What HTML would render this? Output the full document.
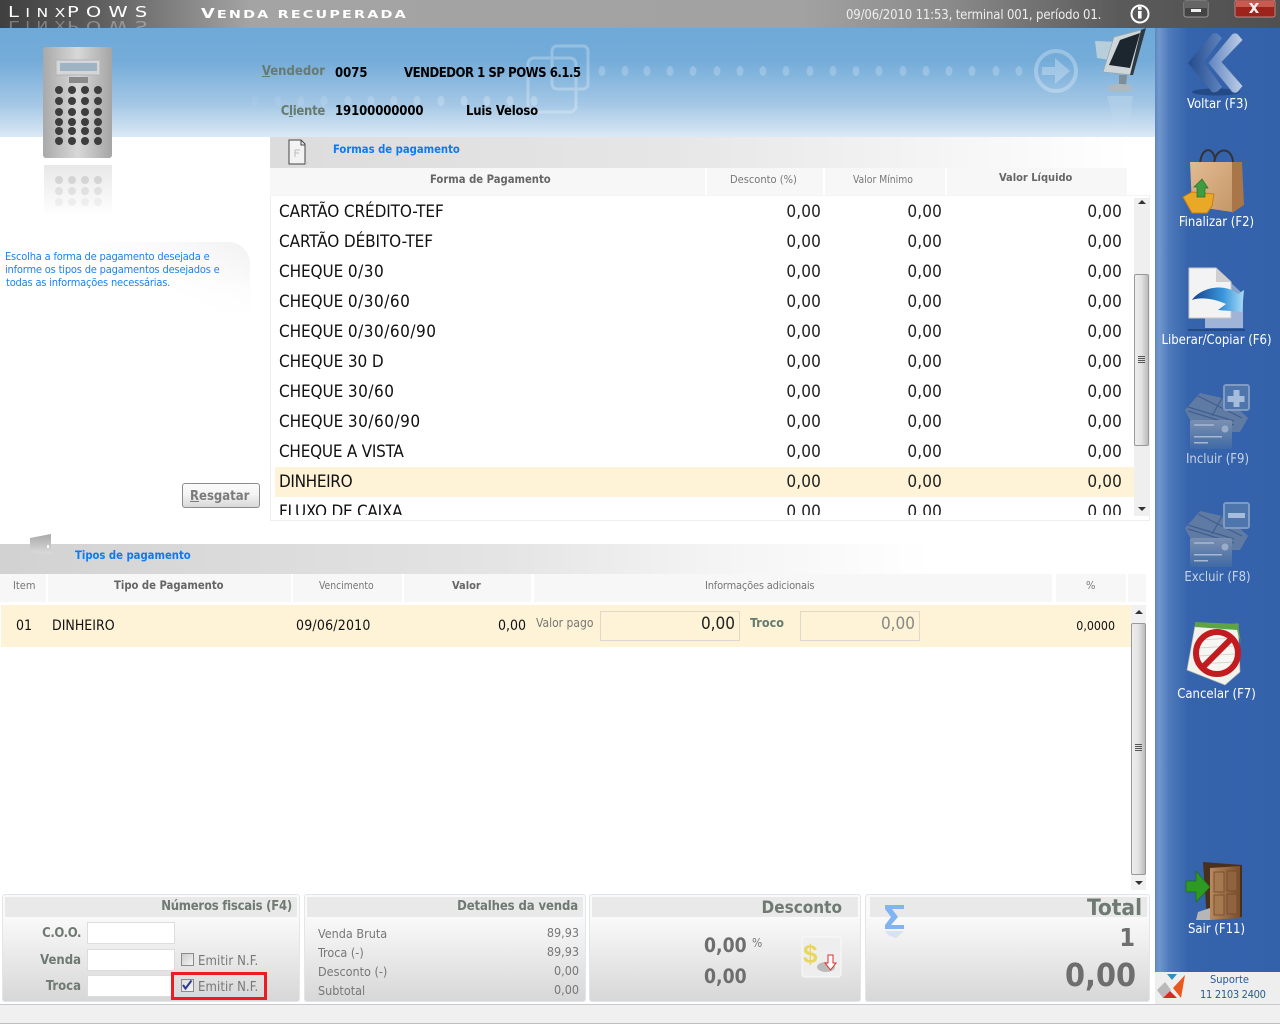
<!DOCTYPE html>
<html lang="pt">
<head>
<meta charset="utf-8">
<title>LinxPOWS</title>
<style>
html,body{margin:0;padding:0;width:1280px;height:1024px;overflow:hidden;background:#fff}
body{position:relative;font-family:"DejaVu Sans Condensed","DejaVu Sans","Liberation Sans",sans-serif;font-stretch:condensed}
.b{position:absolute}
.t{position:absolute;white-space:nowrap;height:20px;line-height:20px;font-size:12px;color:#777;margin-top:1px}
.bd{font-weight:bold}
.r{text-align:right}
.li{font-size:17px;color:#111;letter-spacing:-.1px}
.li span{letter-spacing:.5px}
.n{font-size:17px;color:#222;text-align:right;width:80px;letter-spacing:.15px}
.h{position:absolute;background:#f7f7f7}
.lab{color:#fff;font-size:13px;text-align:center;width:125px;left:1155px}
svg{position:absolute;left:0;top:0}
.wide{font-family:"DejaVu Sans",sans-serif;font-stretch:normal;color:#fff;position:absolute;white-space:nowrap;transform-origin:0 0}
</style>
</head>
<body>
<div class="b" style="left:0;top:0;width:1280px;height:28px;background:linear-gradient(90deg,#3f3f3f 0,#5a5a5a 90px,#a4a4a4 250px,#a2a2a2 800px,#8a8a8a 950px,#5a5a5a 1120px,#505050 1280px)"></div>
<div class="b" style="left:0;top:28px;width:1155px;height:109px;background:linear-gradient(180deg,#6fa9d8 0,#74acd9 30%,#a4c7e5 70%,#dbe9f5 100%)"></div>
<div class="b" style="left:1155px;top:28px;width:125px;height:944px;background:linear-gradient(90deg,#5d86bf 0,#7198cd 4px,#4f7aba 14px,#3563ac 34px,#3362ab 100%)"></div>
<div class="b" style="left:1155px;top:972px;width:125px;height:32px;background:#eeeeee"></div>

<!-- forma pagamento -->
<div class="b" style="left:270px;top:137px;width:885px;height:31px;background:linear-gradient(90deg,#dcdcdc 0,#e6e6e6 400px,#fff 860px)"></div>
<div class="h" style="left:270px;top:168px;width:435px;height:27px"></div>
<div class="h" style="left:707px;top:168px;width:116px;height:27px"></div>
<div class="h" style="left:825px;top:168px;width:120px;height:27px"></div>
<div class="h" style="left:947px;top:168px;width:180px;height:27px"></div>
<div class="b" style="left:270px;top:195px;width:880px;height:326px;border:1px solid #eee;border-top:1px solid #f4f4f4;box-sizing:border-box;overflow:hidden"></div>
<div class="b" style="left:275px;top:467px;width:859px;height:30px;background:#fef3d7"></div>
<div class="b" style="left:1134px;top:198px;width:16px;height:318px;background:#efefef"></div>
<div class="b" style="left:1134px;top:274px;width:15px;height:172px;box-sizing:border-box;border:1px solid #999;border-radius:2px;background:linear-gradient(90deg,#eee,#e2e2e2 50%,#bbb)"></div>

<!-- left help -->
<div class="b" style="left:0;top:242px;width:250px;height:92px;border-top-right-radius:22px;background:linear-gradient(180deg,rgba(255,255,255,0) 35%,#fff 100%),linear-gradient(205deg,#f1f1f1 0,#fafafa 20%,#fff 42%)"></div>
<div class="t" style="left:5px;top:246px;font-size:11px;color:#1a82f0;letter-spacing:-.19px">Escolha a forma de pagamento desejada e</div>
<div class="t" style="left:5px;top:259px;font-size:11px;color:#1a82f0;letter-spacing:-.19px">informe os tipos de pagamentos desejados e</div>
<div class="t" style="left:6px;top:272px;font-size:11px;color:#1a82f0;letter-spacing:-.19px">todas as informações necessárias.</div>
<div class="b" style="left:182px;top:483px;width:78px;height:25px;box-sizing:border-box;border:1px solid #8c8c8c;border-radius:3px;background:linear-gradient(180deg,#fbfbfb,#f4f4f4 45%,#d8d8d8)"></div>
<div class="t bd" style="left:190px;top:486px;font-size:13px;color:#7b7b7b"><u>R</u>esgatar</div>

<!-- tipos -->
<div class="b" style="left:0;top:544px;width:940px;height:30px;background:linear-gradient(90deg,#d2d2d2 0,#e4e4e4 500px,#f3f3f3 700px,#fff 930px)"></div>
<div class="h" style="left:0;top:574px;width:46px;height:28px"></div>
<div class="h" style="left:48px;top:574px;width:243px;height:28px"></div>
<div class="h" style="left:293px;top:574px;width:109px;height:28px"></div>
<div class="h" style="left:404px;top:574px;width:127px;height:28px"></div>
<div class="h" style="left:534px;top:574px;width:518px;height:28px"></div>
<div class="h" style="left:1056px;top:574px;width:70px;height:28px"></div>
<div class="h" style="left:1128px;top:574px;width:18px;height:28px"></div>
<div class="b" style="left:1px;top:605px;width:1130px;height:42px;background:#fef3d7"></div>
<div class="b" style="left:600px;top:611px;width:140px;height:30px;box-sizing:border-box;border:1px solid #ddd9cc"></div>
<div class="b" style="left:800px;top:611px;width:120px;height:30px;box-sizing:border-box;border:1px solid #ddd9cc"></div>
<div class="b" style="left:1131px;top:605px;width:15px;height:285px;background:#f1f1f1"></div>
<div class="b" style="left:1131px;top:623px;width:15px;height:252px;box-sizing:border-box;border:1px solid #999;border-radius:2px;background:linear-gradient(90deg,#eee,#e2e2e2 50%,#bbb)"></div>

<!-- bottom panels -->
<div class="b" style="left:2px;top:894px;width:298px;height:108px;box-sizing:border-box;border:1px solid #dfe6ec;border-radius:3px;background:linear-gradient(180deg,#fafafa 20%,#d7d7d7 100%)"></div>
<div class="b" style="left:304px;top:894px;width:282px;height:108px;box-sizing:border-box;border:1px solid #dfe6ec;border-radius:3px;background:linear-gradient(180deg,#fafafa 20%,#d7d7d7 100%)"></div>
<div class="b" style="left:589px;top:894px;width:272px;height:108px;box-sizing:border-box;border:1px solid #dfe6ec;border-radius:3px;background:linear-gradient(180deg,#fafafa 20%,#d7d7d7 100%)"></div>
<div class="b" style="left:865px;top:894px;width:285px;height:108px;box-sizing:border-box;border:1px solid #dfe6ec;border-radius:3px;background:linear-gradient(180deg,#fafafa 20%,#d7d7d7 100%)"></div>
<div class="b" style="left:5px;top:897px;width:292px;height:20px;background:#e9e9e9"></div>
<div class="b" style="left:307px;top:897px;width:276px;height:20px;background:#e9e9e9"></div>
<div class="b" style="left:592px;top:897px;width:266px;height:20px;background:#e9e9e9"></div>
<div class="b" style="left:870px;top:897px;width:277px;height:20px;background:#e9e9e9"></div>
<div class="b" style="left:87px;top:922px;width:88px;height:22px;box-sizing:border-box;background:#fff;border:1px solid #ddd"></div>
<div class="b" style="left:87px;top:949px;width:88px;height:22px;box-sizing:border-box;background:#fff;border:1px solid #ddd"></div>
<div class="b" style="left:87px;top:975px;width:88px;height:22px;box-sizing:border-box;background:#fff;border:1px solid #ddd"></div>
<div class="b" style="left:171px;top:972px;width:96px;height:28px;box-sizing:border-box;border:3px solid #ed1c24"></div>
<div class="b" style="left:181px;top:953px;width:13px;height:13px;box-sizing:border-box;border:1px solid #8a8a8a;background:linear-gradient(135deg,#ccc,#f4f4f4)"></div>
<div class="b" style="left:181px;top:979px;width:13px;height:13px;box-sizing:border-box;border:1px solid #8a8a8a;background:linear-gradient(135deg,#ddd,#f4f4f4)"></div>
<div class="b" style="left:0;top:1004px;width:1280px;height:20px;box-sizing:border-box;background:#f0f0f0;border-top:1px solid #c9c9c9;border-bottom:1px solid #bdbdbd"></div>

<!-- graphics -->
<svg width="1280" height="1024" viewBox="0 0 1280 1024">
<defs>
<linearGradient id="calc" x1="0" x2="1" y1="0" y2="0"><stop offset="0" stop-color="#a9a9a9"/><stop offset=".5" stop-color="#d8d8d8"/><stop offset="1" stop-color="#a5a5a5"/></linearGradient>
<linearGradient id="fade" x1="0" x2="0" y1="0" y2="1"><stop offset="0" stop-color="#ccc" stop-opacity=".45"/><stop offset="1" stop-color="#ccc" stop-opacity="0"/></linearGradient>
<linearGradient id="bag" x1="0" x2="1" y1="0" y2="1"><stop offset="0" stop-color="#e3bb92"/><stop offset="1" stop-color="#c49868"/></linearGradient>
<linearGradient id="arw" x1="0" x2="1" y1="0" y2="0"><stop offset="0" stop-color="#12428a"/><stop offset=".6" stop-color="#3a96dc"/><stop offset="1" stop-color="#a9dcf8"/></linearGradient>
<linearGradient id="door" x1="0" x2="1" y1="0" y2="0"><stop offset="0" stop-color="#b98a5e"/><stop offset="1" stop-color="#7b4e2b"/></linearGradient>
<linearGradient id="card" x1="0" x2="0" y1="0" y2="1"><stop offset="0" stop-color="#7b90b0"/><stop offset="1" stop-color="#3f6aa6"/></linearGradient>
<linearGradient id="chev1" x1="0" x2="1"><stop offset="0" stop-color="#234b8c"/><stop offset="1" stop-color="#5f83bd"/></linearGradient>
<linearGradient id="chev2" x1="0" x2="1"><stop offset="0" stop-color="#5f83bf"/><stop offset="1" stop-color="#bfcfe8"/></linearGradient>
<linearGradient id="tip" x1="0" x2="0" y1="0" y2="1"><stop offset="0" stop-color="#a8a8a8"/><stop offset="1" stop-color="#dcdcdc"/></linearGradient>
<linearGradient id="mrefl" x1="0" x2="0" y1="0" y2="1"><stop offset="0" stop-color="#fff" stop-opacity=".16"/><stop offset="1" stop-color="#fff" stop-opacity="0"/></linearGradient>
</defs>

<!-- header deco -->
<g fill="#fff" opacity=".2">
<ellipse cx="602" cy="71" rx="3.500" ry="5"/><ellipse cx="625" cy="71" rx="3.500" ry="5"/><ellipse cx="647" cy="71" rx="3.500" ry="5"/><ellipse cx="670" cy="71" rx="3.500" ry="5"/><ellipse cx="693" cy="71" rx="3.500" ry="5"/><ellipse cx="717" cy="71" rx="3.500" ry="5"/><ellipse cx="740" cy="71" rx="3.500" ry="5"/><ellipse cx="763" cy="71" rx="3.500" ry="5"/><ellipse cx="786" cy="71" rx="3.500" ry="5"/><ellipse cx="810" cy="71" rx="3.500" ry="5"/><ellipse cx="833" cy="71" rx="3.500" ry="5"/><ellipse cx="856" cy="71" rx="3.500" ry="5"/><ellipse cx="879" cy="71" rx="3.500" ry="5"/><ellipse cx="903" cy="71" rx="3.500" ry="5"/><ellipse cx="926" cy="71" rx="3.500" ry="5"/><ellipse cx="949" cy="71" rx="3.500" ry="5"/><ellipse cx="972" cy="71" rx="3.500" ry="5"/><ellipse cx="996" cy="71" rx="3.500" ry="5"/><ellipse cx="1019" cy="71" rx="3.500" ry="5"/>
</g>
<g fill="#fff">
<ellipse cx="255" cy="101" rx="3.500" ry="5" opacity=".06"/><ellipse cx="278" cy="101" rx="3.500" ry="5" opacity=".08"/><ellipse cx="301" cy="101" rx="3.500" ry="5" opacity=".1"/><ellipse cx="324" cy="101" rx="3.500" ry="5" opacity=".12"/><ellipse cx="348" cy="101" rx="3.500" ry="5" opacity=".14"/><ellipse cx="371" cy="101" rx="3.500" ry="5" opacity=".16"/><ellipse cx="394" cy="101" rx="3.500" ry="5" opacity=".18"/><ellipse cx="417" cy="101" rx="3.500" ry="5" opacity=".2"/><ellipse cx="441" cy="101" rx="3.500" ry="5" opacity=".22"/><ellipse cx="464" cy="101" rx="3.500" ry="5" opacity=".24"/><ellipse cx="487" cy="101" rx="3.500" ry="5" opacity=".24"/><ellipse cx="510" cy="101" rx="3.500" ry="5" opacity=".24"/><ellipse cx="534" cy="101" rx="3.500" ry="5" opacity=".24"/>
</g>
<g fill="none" stroke="#fff" stroke-width="3" opacity=".26">
<rect x="528" y="58" width="48" height="54" rx="6"/>
<rect x="552" y="46" width="36" height="43" rx="5"/>
</g>
<circle cx="1056" cy="71" r="20" fill="none" stroke="#fff" stroke-width="4" opacity=".28"/>
<path d="M1042 67h13v-9l15 13-15 13v-9h-13z" fill="#fff" opacity=".28"/>

<!-- calculator -->
<rect x="43" y="47" width="69" height="111" rx="3" fill="url(#calc)"/>
<rect x="56" y="60" width="44" height="15" fill="#d3d7da" stroke="#b3b3b3"/>
<rect x="60" y="63" width="37" height="8" fill="#9fb4c2"/>
<rect x="69" y="77" width="19" height="6" fill="#8a8a8a"/>
<g fill="#3d3d3d">
<circle cx="59" cy="90" r="4"/><circle cx="72" cy="90" r="4"/><circle cx="85" cy="90" r="4"/><circle cx="98" cy="90" r="4"/>
<circle cx="59" cy="101" r="4"/><circle cx="72" cy="101" r="4"/><circle cx="85" cy="101" r="4"/><circle cx="98" cy="101" r="4"/>
<circle cx="59" cy="112" r="4"/><circle cx="72" cy="112" r="4"/><circle cx="85" cy="112" r="4"/><circle cx="98" cy="112" r="4"/>
<circle cx="59" cy="122" r="4"/><circle cx="72" cy="122" r="4"/><circle cx="85" cy="122" r="4"/><circle cx="98" cy="122" r="4"/>
<circle cx="59" cy="131" r="4"/><circle cx="72" cy="131" r="4"/><circle cx="85" cy="131" r="4"/><circle cx="98" cy="131" r="4"/>
<circle cx="59" cy="141" r="4"/><circle cx="72" cy="141" r="4"/><circle cx="85" cy="141" r="4"/><circle cx="98" cy="141" r="4"/>
</g>
<rect x="44" y="165" width="68" height="52" fill="url(#fade)"/>
<g fill="#999" opacity=".3">
<circle cx="59" cy="180" r="4"/><circle cx="72" cy="180" r="4"/><circle cx="85" cy="180" r="4"/><circle cx="98" cy="180" r="4"/>
<circle cx="59" cy="191" r="4" opacity=".7"/><circle cx="72" cy="191" r="4" opacity=".7"/><circle cx="85" cy="191" r="4" opacity=".7"/><circle cx="98" cy="191" r="4" opacity=".7"/>
<circle cx="59" cy="202" r="4" opacity=".35"/><circle cx="72" cy="202" r="4" opacity=".35"/><circle cx="85" cy="202" r="4" opacity=".35"/><circle cx="98" cy="202" r="4" opacity=".35"/>
</g>

<!-- monitor -->
<path d="M1095 41l26 1-5 19-19-3z" fill="#c9d7d9" opacity=".8"/>
<path d="M1114 37l31-8-12 46-30-3z" fill="#cfd6da" stroke="#9aa5ab" stroke-width=".7"/>
<path d="M1120 40l20-7-10 35-21-3z" fill="#1c262e"/>
<path d="M1141 30l5-2-13 47-3 0z" fill="#2e3a42"/>
<path d="M1119 75l8 0-1 10h-7z" fill="#7f8d96"/>
<ellipse cx="1120" cy="88" rx="13" ry="4" fill="#aeb9bf"/>
<path d="M1107 96h26l-4 30h-14z" fill="url(#mrefl)"/>

<!-- info -->
<circle cx="1140" cy="14" r="8.500" fill="none" stroke="#fff" stroke-width="2"/>
<path d="M1138 6.800h3.600v3h-3.600zM1138 11h3.600v7.500h-3.600z" fill="#fff"/>

<!-- window buttons -->
<rect x="1184" y="1" width="24" height="16" rx="2" fill="#444" stroke="#999"/>
<rect x="1184" y="1" width="24" height="7" fill="#656565"/>
<rect x="1191" y="9" width="10" height="3" fill="#eee"/>
<rect x="1235" y="0" width="40" height="17" rx="2" fill="#9d241c" stroke="#bb8883"/>
<rect x="1236" y="1" width="38" height="6" fill="#c85a50"/>
<path d="M1249 3l3 0 2 3 2-3 3 0-3.500 5 3.500 5-3 0-2-3-2 3-3 0 3.500-5z" fill="#f0eeee"/>

<!-- voltar -->
<ellipse cx="1216" cy="92" rx="24" ry="3.500" fill="#234a85"/>
<path d="M1188 63l24-29q3-2 6 0l4 4-18 24 18 25-4 4q-3 2-6 1z" fill="url(#chev1)"/>
<path d="M1208 63l24-29q3-2 6 0l5 6-21 22 21 24-5 6q-3 2-6 0z" fill="url(#chev2)" stroke="#3d66a5" stroke-width=".8"/>

<!-- bag -->
<path d="M1200 166c0-20 14-20 15-6M1214 166c0-20 18-20 19-4" fill="none" stroke="#333" stroke-width="2"/>
<path d="M1190 162h42l0 50-40-6z" fill="url(#bag)"/>
<path d="M1232 162l10 0 2 43-12 8z" fill="#a87648"/>
<path d="M1183 197l9-5 22 2-2 12-5 7h-15z" fill="#e9a826" stroke="#c97f15"/>
<path d="M1197 197v-10h-3l8-8 6 9h-3v9z" fill="#3f9c40" stroke="#2d6c2c" stroke-width=".7"/>

<!-- liberar -->
<path d="M1205 300h38v28h-38z" fill="#9fb4d6"/>
<path d="M1228 280l15 14v10h-15z" fill="#88a2c9"/>
<path d="M1189 268h27l15 14v36h-42z" fill="#f3f3f3" stroke="#c9c9c9"/>
<path d="M1216 268l15 14h-15z" fill="#cfcfcf"/>
<path d="M1192 300c8-12 32-18 46-6l6-4-2 22-24-2 8-6c-8-4-24-8-34-4z" fill="url(#arw)"/>
<rect x="1188" y="329" width="57" height="2" fill="#203d6e" opacity=".7"/>

<!-- incluir -->
<g id="cards">
<path d="M1185 410l15-17 22 5 10 5 16 15-8 14h-8l-42-12z" fill="#607ba3"/>
<path d="M1188 407l46 14M1188 411l46 14M1198 396l44 22M1222 398l-10 18" stroke="#3f5e90" stroke-width="1.200" fill="none"/>
<rect x="1190" y="420" width="42" height="29" rx="2" fill="url(#card)"/>
<rect x="1194" y="424" width="20" height="2" fill="#99adc9"/>
<rect x="1194" y="436" width="28" height="1.500" fill="#a7b8d0"/>
<rect x="1194" y="442" width="14" height="1.500" fill="#a7b8d0"/>
<circle cx="1225" cy="429" r="3.500" fill="#99adc9"/>
</g>
<rect x="1224" y="385" width="25" height="25" rx="2" fill="#4f75ad" stroke="#7f9bc4" stroke-width="2"/>
<path d="M1233.500 390h6v6h5v6h-5v5h-6v-5h-6v-6h6z" fill="#a6bcdb"/>

<!-- excluir -->
<use href="#cards" y="118"/>
<rect x="1224" y="503" width="25" height="25" rx="2" fill="#4f75ad" stroke="#7f9bc4" stroke-width="2"/>
<rect x="1228" y="513" width="17" height="5" fill="#a6bcdb"/>

<!-- cancelar -->
<path d="M1195 626l43-2 2 48-15 13-38-15z" fill="#f3f3ee" stroke="#b9b9b0" stroke-width=".7"/>
<path d="M1195 622l43 2 3 20-4-14-42-3z" fill="#5fa344"/>
<g stroke="#c9c9c2" stroke-width="1"><path d="M1198 640l36-2M1197 648l38-2M1196 656l40-2M1195 664l41-2"/></g>
<circle cx="1217" cy="653" r="21" fill="#ffffff" fill-opacity=".25" stroke="#c21c20" stroke-width="6"/>
<path d="M1202 668l30-30" stroke="#c21c20" stroke-width="6"/>

<!-- sair -->
<path d="M1203 862l39 3v52l-35 3z" fill="#49301c"/>
<path d="M1210 868l30-2v52l-30 2z" fill="url(#door)"/>
<rect x="1214" y="872" width="10" height="20" fill="#a67a50" stroke="#6f4a2a" stroke-width=".8"/>
<rect x="1227" y="871" width="10" height="20" fill="#8f6340" stroke="#6f4a2a" stroke-width=".8"/>
<rect x="1214" y="895" width="10" height="20" fill="#a67a50" stroke="#6f4a2a" stroke-width=".8"/>
<rect x="1227" y="894" width="10" height="20" fill="#8f6340" stroke="#6f4a2a" stroke-width=".8"/>
<path d="M1198 912l12-4v12l-14 0z" fill="#b6b6b6"/>
<path d="M1186 881h10v-10l14 16-14 15v-10h-10z" fill="#2d9a24" stroke="#1d6c18" stroke-width=".7"/>

<!-- support logo -->
<path d="M1167 974h10l-5 6z" fill="#2f8fc2"/>
<path d="M1185 975l-12 13 8 10z" fill="#e8581f"/>
<path d="M1165 982l6 8-8 8-6-8z" fill="#b9b9b9"/>
<path d="M1170 991l7 7h-14z" fill="#d92a25"/>

<!-- icons small -->
<path d="M289 140h12l4 4v20h-16z" fill="#f3f3f3" stroke="#444"/>
<path d="M301 140v5h4" fill="none" stroke="#444"/>
<path d="M295 150h5M295 150v7M295 153h4" stroke="#bbb" fill="none"/>
<path d="M305 162l3 1-3 1z" fill="#aaa"/>
<path d="M30 538l21-4v20l-21-2z" fill="url(#tip)"/>
<path d="M47 545h2v3h-2z" fill="#fff"/>

<!-- sigma -->
<path d="M885 905h19v4l-12 0 6 8-7 8 13 0v4h-19v-4l6-8-6-8z" fill="#82b4f2"/>
<path d="M885 931h19l-8 7-8-3z" fill="#82b4f2" opacity=".25"/>

<!-- desconto button -->
<rect x="802" y="937" width="39" height="40" rx="3" fill="#eeeeee" stroke="#fafafa"/>
<ellipse cx="826" cy="967" rx="9" ry="5" fill="#bbb"/>
<text x="803" y="963" font-family="Liberation Sans,sans-serif" font-weight="bold" font-size="26" fill="#e9d65f">$</text>
<path d="M828 955h5v8h3l-5.500 7-5.500-7h3z" fill="#fff" stroke="#e02a2a" stroke-width="1"/>

<!-- checkmark -->
<path d="M183 985l2.500 3.500 6-8" fill="none" stroke="#2f3b92" stroke-width="2"/>

<!-- scroll arrows -->
<g fill="#333">
<path d="M1138 204l4-4 4 4z"/><path d="M1138 507l4 4 4-4z"/>
<path d="M1135 614l4-4 4 4z"/><path d="M1135 881l4 4 4-4z"/>
</g>
<g stroke="#555" stroke-width="1">
<path d="M1138 356.500h7M1138 358.500h7M1138 360.500h7M1138 362.500h7"/>
<path d="M1135 744.500h7M1135 746.500h7M1135 748.500h7M1135 750.500h7"/>
</g>
</svg>

<!-- title bar text -->
<div class="b" style="left:0;top:0;width:300px;height:28px;overflow:hidden">
<div class="wide" style="left:8px;top:3px;font-size:15px;line-height:18px;letter-spacing:5px;transform:scaleX(1.3)">L<span style="font-size:12px">INX</span></div>
<div class="wide" style="left:67px;top:3px;font-size:15px;line-height:18px;letter-spacing:5.500px;transform:scaleX(1.3)">POWS</div>
<div class="wide" style="left:8px;top:17px;font-size:15px;line-height:18px;letter-spacing:5px;opacity:.3;transform:scale(1.3,-1);transform-origin:0 9px">L<span style="font-size:12px">INX</span></div>
<div class="wide" style="left:67px;top:17px;font-size:15px;line-height:18px;letter-spacing:5.500px;opacity:.3;transform:scale(1.3,-1);transform-origin:0 9px">POWS</div>
</div>
<div class="wide" style="left:201px;top:5px;height:20px;line-height:20px;font-size:13px;letter-spacing:1.600px;font-weight:bold;transform:scaleX(1.365)">V<span style="font-size:10.500px">ENDA RECUPERADA</span></div>
<div class="t" style="left:846px;top:5px;font-size:13px;color:#eee;letter-spacing:-.14px">09/06/2010 11:53, terminal 001, período 01.</div>

<!-- header text -->
<div class="t bd r" style="right:955px;top:61px;font-size:13px;color:#667a70"><u>V</u>endedor</div>
<div class="t bd" style="left:335px;top:63px;font-size:13px;color:#000">0075</div>
<div class="t bd" style="left:404px;top:63px;font-size:13px;color:#000;letter-spacing:-.46px">VENDEDOR 1 SP POWS 6.1.5</div>
<div class="t bd r" style="right:955px;top:101px;font-size:13px;color:#667a70;letter-spacing:-.3px">C<u>l</u>iente</div>
<div class="t bd" style="left:335px;top:101px;font-size:13px;color:#000;letter-spacing:-.1px">19100000000</div>
<div class="t bd" style="left:466px;top:101px;font-size:13px;color:#000;letter-spacing:-.2px">Luis Veloso</div>

<div class="t bd" style="left:333px;top:139px;font-size:11.200px;color:#0a7bf5">Formas de pagamento</div>
<div class="t bd" style="left:430px;top:169px;font-size:11.200px;color:#666">Forma de Pagamento</div>
<div class="t" style="left:730px;top:169px;font-size:11px;color:#777">Desconto (%)</div>
<div class="t" style="left:853px;top:169px;font-size:10.300px;color:#777">Valor Mínimo</div>
<div class="t bd" style="left:999px;top:167px;font-size:11px;color:#666">Valor Líquido</div>

<!-- list -->
<div class="b" style="left:271px;top:196px;width:863px;height:319px;overflow:hidden">
<div class="t li" style="left:8px;top:5px">CARTÃO CRÉDITO-TEF</div><div class="t n" style="left:470px;top:5px">0,00</div><div class="t n" style="left:591px;top:5px">0,00</div><div class="t n" style="left:771px;top:5px">0,00</div>
<div class="t li" style="left:8px;top:35px">CARTÃO DÉBITO-TEF</div><div class="t n" style="left:470px;top:35px">0,00</div><div class="t n" style="left:591px;top:35px">0,00</div><div class="t n" style="left:771px;top:35px">0,00</div>
<div class="t li" style="left:8px;top:65px">CHEQUE <span>0/30</span></div><div class="t n" style="left:470px;top:65px">0,00</div><div class="t n" style="left:591px;top:65px">0,00</div><div class="t n" style="left:771px;top:65px">0,00</div>
<div class="t li" style="left:8px;top:95px">CHEQUE <span>0/30/60</span></div><div class="t n" style="left:470px;top:95px">0,00</div><div class="t n" style="left:591px;top:95px">0,00</div><div class="t n" style="left:771px;top:95px">0,00</div>
<div class="t li" style="left:8px;top:125px">CHEQUE <span>0/30/60/90</span></div><div class="t n" style="left:470px;top:125px">0,00</div><div class="t n" style="left:591px;top:125px">0,00</div><div class="t n" style="left:771px;top:125px">0,00</div>
<div class="t li" style="left:8px;top:155px">CHEQUE 30 D</div><div class="t n" style="left:470px;top:155px">0,00</div><div class="t n" style="left:591px;top:155px">0,00</div><div class="t n" style="left:771px;top:155px">0,00</div>
<div class="t li" style="left:8px;top:185px">CHEQUE <span>30/60</span></div><div class="t n" style="left:470px;top:185px">0,00</div><div class="t n" style="left:591px;top:185px">0,00</div><div class="t n" style="left:771px;top:185px">0,00</div>
<div class="t li" style="left:8px;top:215px">CHEQUE <span>30/60/90</span></div><div class="t n" style="left:470px;top:215px">0,00</div><div class="t n" style="left:591px;top:215px">0,00</div><div class="t n" style="left:771px;top:215px">0,00</div>
<div class="t li" style="left:8px;top:245px;letter-spacing:-.25px">CHEQUE A VISTA</div><div class="t n" style="left:470px;top:245px">0,00</div><div class="t n" style="left:591px;top:245px">0,00</div><div class="t n" style="left:771px;top:245px">0,00</div>
<div class="t li" style="left:8px;top:275px;letter-spacing:-.35px">DINHEIRO</div><div class="t n" style="left:470px;top:275px">0,00</div><div class="t n" style="left:591px;top:275px">0,00</div><div class="t n" style="left:771px;top:275px">0,00</div>
<div class="t li" style="left:8px;top:305px;letter-spacing:-.25px">FLUXO DE CAIXA</div><div class="t n" style="left:470px;top:305px">0,00</div><div class="t n" style="left:591px;top:305px">0,00</div><div class="t n" style="left:771px;top:305px">0,00</div>
</div>

<!-- tipos text -->
<div class="t bd" style="left:75px;top:545px;font-size:11.200px;color:#0a7bf5">Tipos de pagamento</div>
<div class="t" style="left:13px;top:575px;font-size:11px;color:#777">Item</div>
<div class="t bd" style="left:114px;top:575px;font-size:11.200px;color:#666">Tipo de Pagamento</div>
<div class="t" style="left:319px;top:575px;font-size:10.300px;color:#777">Vencimento</div>
<div class="t bd" style="left:452px;top:575px;font-size:11px;color:#666">Valor</div>
<div class="t" style="left:705px;top:575px;font-size:11px;color:#777;letter-spacing:-.2px">Informações adicionais</div>
<div class="t" style="left:1086px;top:575px;font-size:11px;color:#777">%</div>
<div class="t" style="left:16px;top:615px;font-size:14px;color:#111">01</div>
<div class="t" style="left:52px;top:615px;font-size:14px;color:#111">DINHEIRO</div>
<div class="t" style="left:296px;top:615px;font-size:14px;color:#111;letter-spacing:.2px">09/06/2010</div>
<div class="t r" style="right:754px;top:615px;font-size:14px;color:#111">0,00</div>
<div class="t" style="left:536px;top:612px;font-size:12px;color:#777">Valor pago</div>
<div class="t r" style="right:545px;top:613px;font-size:17px;color:#222">0,00</div>
<div class="t bd" style="left:750px;top:612px;font-size:12.500px;color:#667a70">Troco</div>
<div class="t r" style="right:365px;top:613px;font-size:17px;color:#888">0,00</div>
<div class="t r" style="right:165px;top:615px;font-size:12.300px;color:#111">0,0000</div>

<!-- bottom text -->
<div class="t bd r" style="right:988px;top:896px;font-size:13px;color:#6f7a72;letter-spacing:-.25px">Números fiscais (F4)</div>
<div class="t bd r" style="right:1199px;top:923px;font-size:13px;color:#6f7a72;letter-spacing:-.4px">C.O.O.</div>
<div class="t bd r" style="right:1199px;top:950px;font-size:13px;color:#6f7a72">Venda</div>
<div class="t bd r" style="right:1199px;top:976px;font-size:13px;color:#6f7a72">Troca</div>
<div class="t" style="left:198px;top:951px;font-size:13px;color:#777;letter-spacing:.1px">Emitir N.F.</div>
<div class="t" style="left:198px;top:977px;font-size:13px;color:#777;letter-spacing:.1px">Emitir N.F.</div>

<div class="t bd r" style="right:702px;top:896px;font-size:13px;color:#6f7a72;letter-spacing:-.12px">Detalhes da venda</div>
<div class="t" style="left:318px;top:923px;font-size:12.500px">Venda Bruta</div><div class="t r" style="right:701px;top:922px;font-size:12.500px">89,93</div>
<div class="t" style="left:318px;top:942px;font-size:12.500px">Troca (-)</div><div class="t r" style="right:701px;top:941px;font-size:12.500px">89,93</div>
<div class="t" style="left:318px;top:961px;font-size:12.500px">Desconto (-)</div><div class="t r" style="right:701px;top:960px;font-size:12.500px">0,00</div>
<div class="t" style="left:318px;top:980px;font-size:12.500px">Subtotal</div><div class="t r" style="right:701px;top:979px;font-size:12.500px">0,00</div>

<div class="t bd r" style="right:438px;top:897px;font-size:17px;color:#6f7a72">Desconto</div>
<div class="t bd" style="left:704px;top:935px;font-size:19.200px;color:#6e6e6e">0,00</div>
<div class="t" style="left:752px;top:932px;font-size:12px;color:#777">%</div>
<div class="t bd" style="left:704px;top:966px;font-size:19.200px;color:#6e6e6e">0,00</div>

<div class="t bd r" style="right:138px;top:897px;font-size:22.500px;color:#6f7a72">Total</div>
<div class="t bd r" style="right:145px;top:927px;font-size:25px;color:#6e6e6e">1</div>
<div class="t bd r" style="right:144px;top:964px;font-size:32px;color:#6e6e6e">0,00</div>

<!-- sidebar labels -->
<div class="t lab" style="top:94px">Voltar (F3)</div>
<div class="t lab" style="top:212px;left:1154px">Finalizar (F2)</div>
<div class="t lab" style="top:330px;left:1154px">Liberar/Copiar (F6)</div>
<div class="t lab" style="top:449px;left:1155px;color:#c8d4e6">Incluir (F9)</div>
<div class="t lab" style="top:567px;left:1155px;color:#c8d4e6">Excluir (F8)</div>
<div class="t lab" style="top:684px;left:1154px">Cancelar (F7)</div>
<div class="t lab" style="top:919px;left:1154px">Sair (F11)</div>
<div class="t" style="left:1210px;top:969px;font-size:11px;color:#2a5a96">Suporte</div>
<div class="t" style="left:1200px;top:984px;font-size:11px;color:#2a5a96;letter-spacing:-.3px">11 2103 2400</div>
</body>
</html>
